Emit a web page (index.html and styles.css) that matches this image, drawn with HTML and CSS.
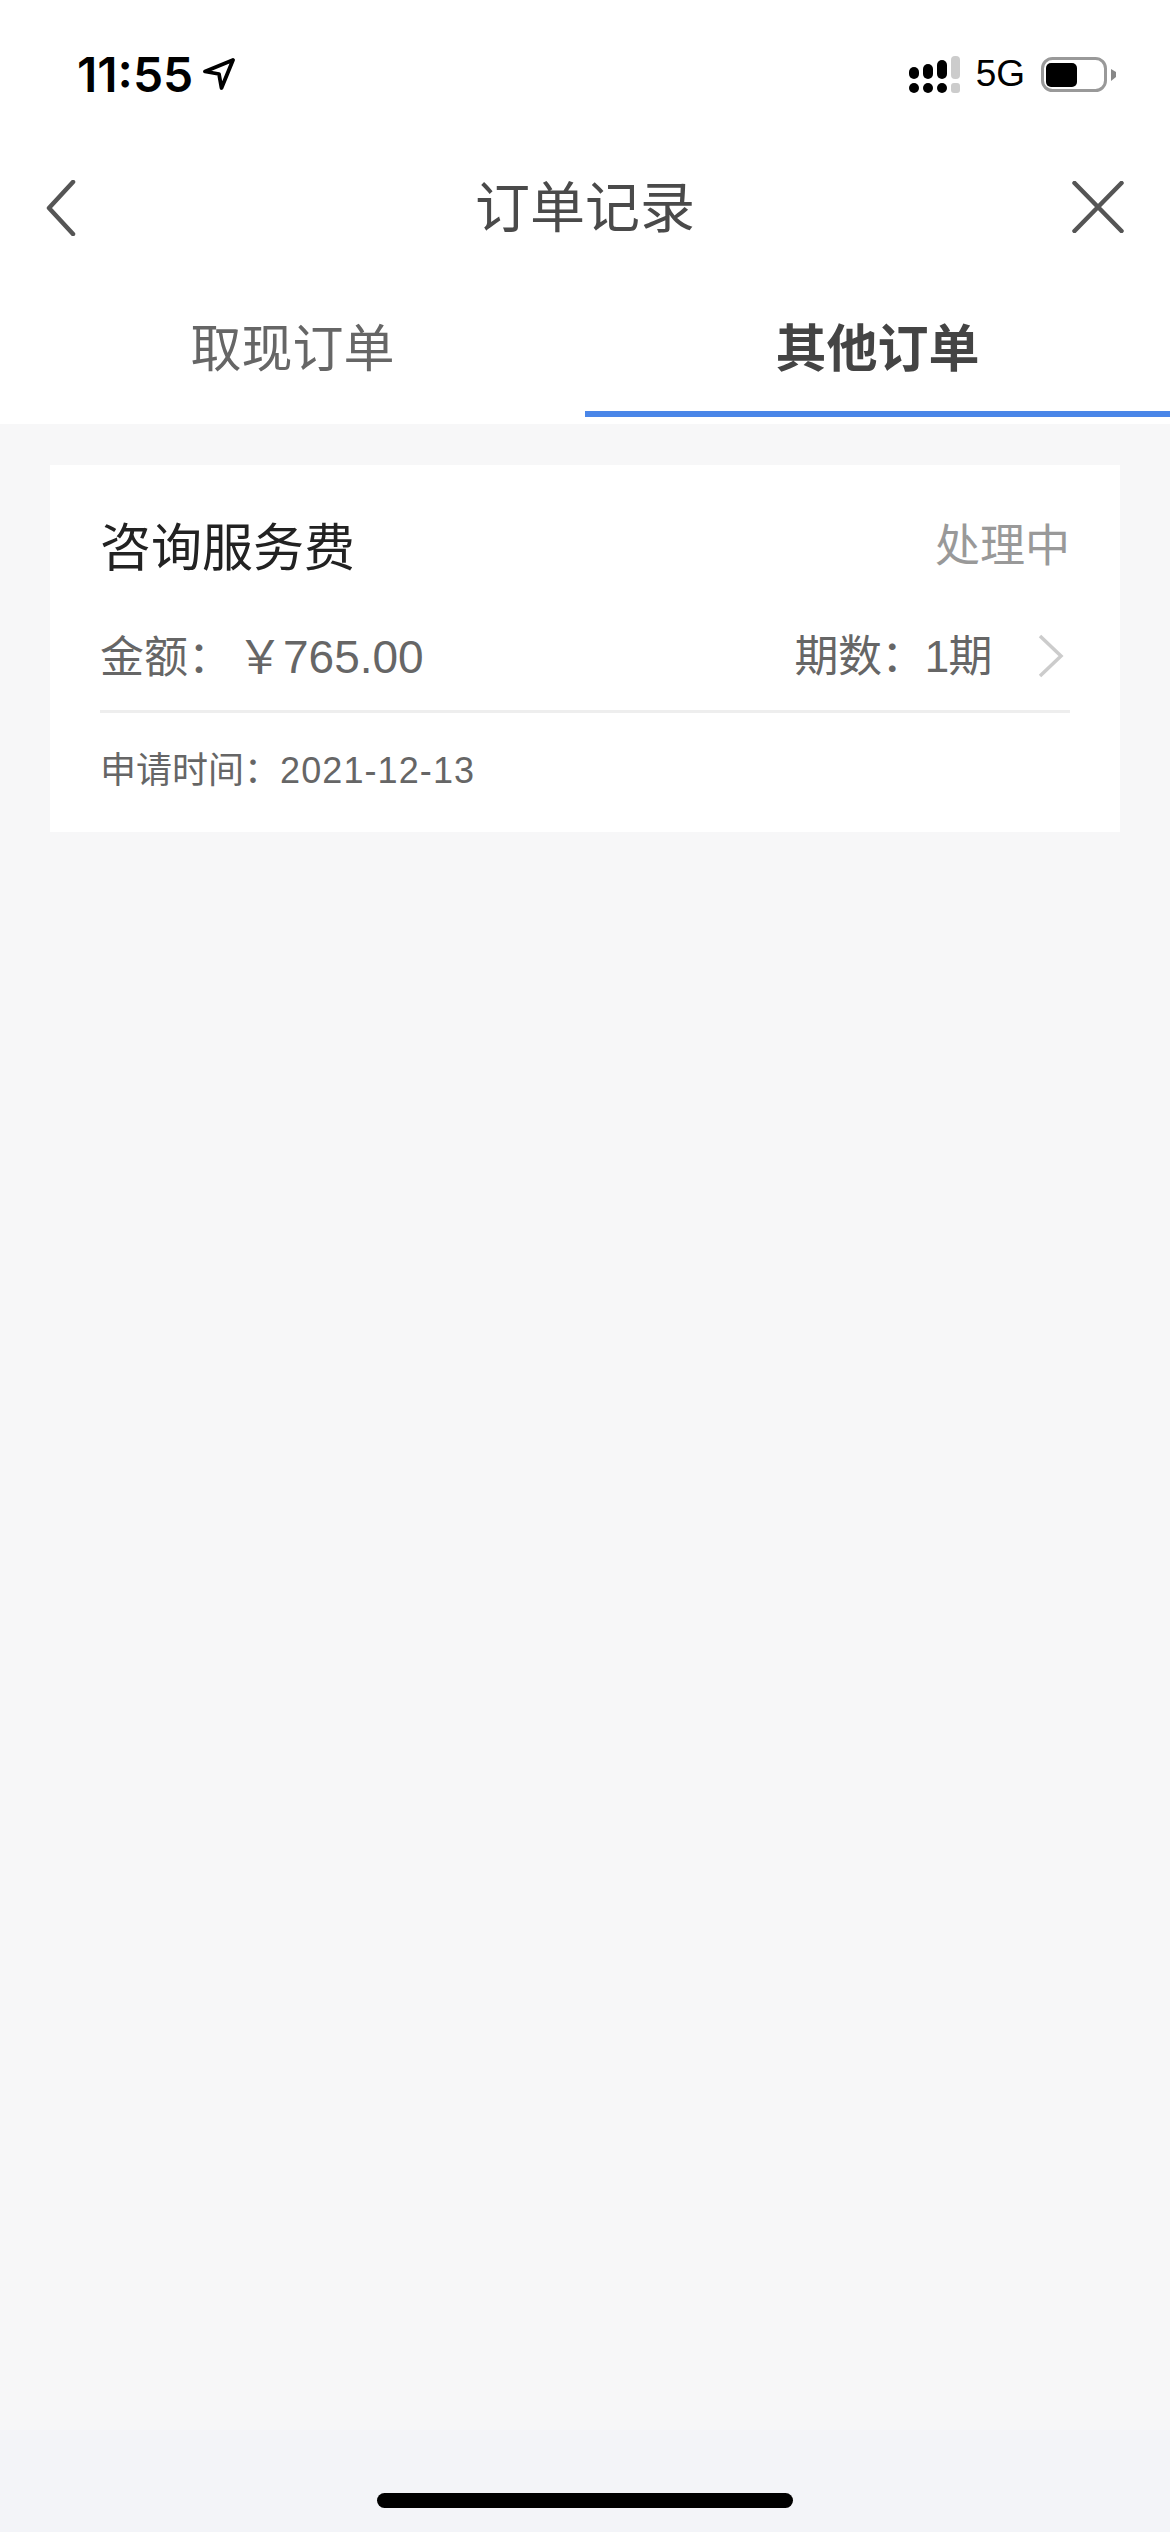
FILE: index.html
```html
<!DOCTYPE html>
<html lang="zh-CN">

<head>
	<meta charset="utf-8">
	<title>订单记录</title>
	<link rel="stylesheet" href="styles.css">
</head>

<body class="body">

	<div class="statusBar">
		<div class="statusLeft">
			<span class="statusTime">11:55</span>
			<svg class="locationIcon" width="32" height="32" viewBox="0 0 32 32">
				<path d="M30 2 L2 13.5 L16 16 L18.5 30 Z" fill="none" stroke="#000" stroke-width="3.8" stroke-linejoin="round"/>
			</svg>
		</div>
		<div class="statusRight">
			<svg class="signalIcon" width="51" height="37" viewBox="0 0 51 37">
				<rect x="0" y="11" width="10" height="12" rx="5" fill="#000"/>
				<rect x="14" y="8" width="10" height="15" rx="5" fill="#000"/>
				<rect x="28" y="4" width="10" height="19" rx="5" fill="#000"/>
				<rect x="42" y="0" width="9" height="23" rx="4" fill="#ccc"/>
				<rect x="0" y="27" width="10" height="10" rx="5" fill="#000"/>
				<rect x="14" y="27" width="10" height="10" rx="5" fill="#000"/>
				<rect x="28" y="27" width="10" height="10" rx="5" fill="#000"/>
				<rect x="42" y="27" width="9" height="10" rx="3" fill="#ccc"/>
			</svg>
			<span class="networkLabel">5G</span>
			<svg class="batteryIcon" width="75" height="35" viewBox="0 0 75 35">
				<rect x="1.5" y="1.5" width="63" height="32" rx="10" fill="#fff" stroke="#999" stroke-width="3"/>
				<rect x="5" y="6" width="31" height="24" rx="5" fill="#000"/>
				<path d="M70 12 L75 15 L75 20 L70 24 Z" fill="#888"/>
			</svg>
		</div>
	</div>

	<div class="navBar">
		<div class="navSide">
			<svg class="navIcon" width="30" height="56" viewBox="0 0 30 56">
				<path d="M27 2 L3 28 L27 54" fill="none" stroke="#555" stroke-width="4.5" stroke-linecap="round" stroke-linejoin="round"/>
			</svg>
		</div>
		<div class="navTitle">订单记录</div>
		<div class="navSide navSideRight">
			<svg class="navIcon closeIcon" width="52" height="52" viewBox="0 0 52 52">
				<path d="M2.500 2 L49.500 50 M49.500 2 L2.500 50" fill="none" stroke="#555" stroke-width="4.5" stroke-linecap="round"/>
			</svg>
		</div>
	</div>

	<div class="tabs">
		<div class="tab">取现订单</div>
		<div class="tab tabActive">其他订单</div>
	</div>

	<div class="content">
		<div class="orderCard">
			<div class="orderHead">
				<span class="orderName">咨询服务费</span>
				<span class="orderState">处理中</span>
			</div>
			<div class="orderInfo">
				<span class="orderText">金额：<span class="orderAmount">￥765.00</span></span>
				<span class="orderTerm">
					<span class="orderText orderCount">期数：1期</span>
					<svg width="26" height="44" viewBox="0 0 26 44">
						<path d="M2 2 L23 22 L2 42" fill="none" stroke="#ccc" stroke-width="3.5"/>
					</svg>
				</span>
			</div>
			<div class="orderDate">申请时间：<span class="orderDay">2021-12-13</span></div>
		</div>
	</div>

	<div class="homeArea">
		<div class="homeBar"></div>
	</div>

</body>

</html>
```

FILE: styles.css
```css
.body {
	margin: 0;
	width: 1170px;
	min-height: 2532px;
	display: flex;
	flex-direction: column;
	background-color: #FFFFFF;
	font-family: "Liberation Sans", "Noto Sans CJK SC", sans-serif;
}

.statusBar {
	height: 148px;
	display: flex;
	justify-content: space-between;
	align-items: center;
	padding: 0 54px 0 77px;
}

.statusLeft {
	display: flex;
	align-items: center;
	gap: 10px;
}

.statusTime {
	font: 600 48px "Inter", sans-serif;
	color: #000000;
}

.statusRight {
	display: flex;
	align-items: center;
}

.networkLabel {
	font-size: 37px;
	color: #000000;
	margin-left: 16px;
	margin-right: 16px;
}

.navBar {
	height: 120px;
	padding: 0 46px 4px;
	display: flex;
	align-items: center;
}

.navSide {
	width: 80px;
}

.navSideRight {
	display: flex;
	justify-content: flex-end;
}

.navTitle {
	flex: 1;
	padding-bottom: 11px;
	text-align: center;
	font-size: 55px;
	color: #4A4A4A;
}

.navIcon {
	display: block;
}

.closeIcon {
	margin-bottom: 2px;
}

.tabs {
	height: 152px;
	display: flex;
	box-sizing: border-box;
	padding-bottom: 7px;
}

.tab {
	width: 50%;
	display: flex;
	justify-content: center;
	align-items: center;
	padding-top: 6px;
	border-bottom: 6px solid transparent;
	font-size: 51px;
	color: #666666;
}

.tabActive {
	border-bottom-color: #4A86E8;
	font-weight: bold;
	color: #444444;
}

.content {
	flex: 1;
	padding: 41px 50px 0;
	background-color: #F7F7F8;
}

.orderCard {
	background-color: #FFFFFF;
	padding: 52px 50px 36px;
}

.orderHead {
	display: flex;
	justify-content: space-between;
	align-items: center;
	height: 60px;
}

.orderName {
	padding-bottom: 6px;
	font-size: 51px;
	color: #222222;
}

.orderState {
	padding-bottom: 10px;
	font-size: 45px;
	color: #999999;
}

.orderInfo {
	display: flex;
	justify-content: space-between;
	align-items: center;
	height: 60px;
	margin-top: 49px;
	padding-bottom: 24px;
	border-bottom: 3px solid #EEEEEE;
	font-size: 44px;
	color: #666666;
}

.orderText {
	padding-bottom: 6px;
}

.orderAmount {
	margin-left: 5px;
	font-size: 46px;
}

.orderCount {
	letter-spacing: -0.6px;
}

.orderTerm {
	display: flex;
	align-items: center;
	gap: 46px;
	padding-right: 6px;
}

.orderDate {
	height: 50px;
	line-height: 50px;
	margin-top: 33px;
	font-size: 36px;
	color: #666666;
}

.orderDay {
	letter-spacing: 1.1px;
}

.homeArea {
	height: 102px;
	display: flex;
	justify-content: center;
	background-color: #F3F4F8;
}

.homeBar {
	width: 416px;
	height: 15px;
	margin-top: 63px;
	border-radius: 8px;
	background-color: #000000;
}
```
